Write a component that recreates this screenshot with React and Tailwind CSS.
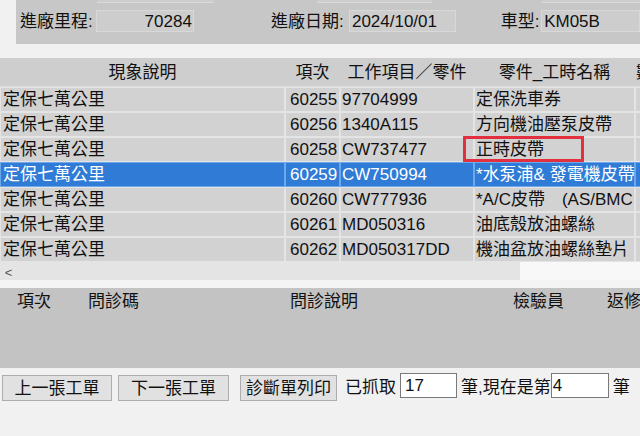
import React from 'react';

const rows = [
  { no: '60255', part: '97704999', name: '定保洗車券' },
  { no: '60256', part: '1340A115', name: '方向機油壓泵皮帶' },
  { no: '60258', part: 'CW737477', name: '正時皮帶' },
  { no: '60259', part: 'CW750994', name: '*水泵浦& 發電機皮帶', selected: true },
  { no: '60260', part: 'CW777936', name: '*A/C皮帶　(AS/BMC' },
  { no: '60261', part: 'MD050316', name: '油底殼放油螺絲' },
  { no: '60262', part: 'MD050317DD', name: '機油盆放油螺絲墊片' },
];

function Cell({ width, selected, className = '', children }) {
  return (
    <div
      className={`h-full flex items-center shrink-0 whitespace-nowrap overflow-hidden border ${
        selected ? 'border-[#6ea8ec] text-white' : 'border-[#e4e4e4] text-[#111]'
      } ${width} ${className}`}
    >
      {children}
    </div>
  );
}

export default function App() {
  return (
    <div
      className="w-[640px] h-[436px] overflow-hidden bg-[#f1f1f1] text-[17px] leading-none text-[#111]"
      style={{ fontFamily: '"Liberation Sans", "Noto Sans CJK TC", sans-serif' }}
    >
      {/* top info panel */}
      <div className="h-[44px] ml-[16px] bg-[#c7c7c7] flex flex-col">
        <div className="h-[3px] flex">
          <div className="ml-[81px] w-[120px] bg-[#cdcdcd] border-b border-[#dadada]" />
          <div className="ml-[103px] w-[118px] bg-[#cdcdcd] border-b border-[#dadada]" />
          <div className="ml-[110px] w-[100px] bg-[#cdcdcd] border-b border-[#dadada]" />
        </div>
        <div className="flex items-center mt-[7px] h-[22px]">
          <span className="ml-[4px] w-[77px]">進廠里程:</span>
          <div className="w-[99px] h-[22px] bg-[#cdcdcd] border border-[#d8d8d8] flex items-center justify-end pr-[1px]">
            70284
          </div>
          <span className="ml-[77px] w-[79px]">進廠日期:</span>
          <div className="w-[108px] h-[22px] bg-[#cdcdcd] border border-[#d8d8d8] flex items-center pl-[2px]">
            2024/10/01
          </div>
          <span className="ml-[45px] w-[41px]">車型:</span>
          <div className="w-[100px] h-[22px] bg-[#cdcdcd] border border-[#d8d8d8] flex items-center pl-[2px]">
            KM05B
          </div>
        </div>
      </div>

      <div className="h-[14px]" />

      {/* grid header */}
      <div className="h-[29px] bg-[#cecece] flex items-center border-b border-[#dedede]">
        <div className="w-[285px] text-center shrink-0">現象說明</div>
        <div className="w-[55px] text-center shrink-0">項次</div>
        <div className="w-[134px] text-center shrink-0">工作項目／零件</div>
        <div className="w-[161px] text-center shrink-0">零件_工時名稱</div>
        <div className="w-[5px] overflow-hidden pl-[1px] whitespace-nowrap">數</div>
      </div>

      {/* grid rows */}
      {rows.map((r) => (
        <div
          key={r.no}
          className={`h-[25px] flex ${r.selected ? 'bg-[#2f7bd6]' : 'bg-[#d2d2d2]'}`}
        >
          <Cell width="w-[285px]" selected={r.selected} className="pl-[2px]">
            定保七萬公里
          </Cell>
          <Cell width="w-[55px]" selected={r.selected} className="pl-[4px]">
            {r.no}
          </Cell>
          <Cell width="w-[134px]" selected={r.selected} className="pl-[1px]">
            {r.part}
          </Cell>
          <Cell width="w-[161px]" selected={r.selected} className="pl-[1px]">
            {r.name}
          </Cell>
          <Cell width="w-[40px]" selected={r.selected} />
        </div>
      ))}

      {/* red annotation box over row 3 */}
      <div className="h-0 relative">
        <div className="absolute left-[463px] top-[-126px] w-[121px] h-[26px] border-[3px] border-[#e3303e]" />
      </div>

      {/* horizontal scrollbar */}
      <div className="h-[18px] flex bg-[#f8f8f8]">
        <div className="w-[17px] flex items-center justify-center bg-[#e4e4e4] text-[#555] text-[13px] pt-[3px]">
          &lt;
        </div>
        <div className="w-[503px] bg-[#e4e4e4]" />
      </div>
      <div className="h-[8px] bg-[#f4f4f4]" />

      {/* lower panel */}
      <div className="h-[80px] bg-[#c3c3c3] flex items-start pt-[5px] whitespace-nowrap">
        <span className="ml-[17px]">項次</span>
        <span className="ml-[37px]">問診碼</span>
        <span className="ml-[151px]">問診說明</span>
        <span className="ml-[155px]">檢驗員</span>
        <span className="ml-[43px]">返修</span>
      </div>

      {/* bottom buttons */}
      <div className="flex items-start pt-[5px] whitespace-nowrap">
        <button className="ml-[2px] mt-[2px] w-[110px] h-[26px] bg-[#e1e1e1] border border-[#adadad]">
          上一張工單
        </button>
        <button className="ml-[6px] mt-[2px] w-[111px] h-[26px] bg-[#e1e1e1] border border-[#adadad]">
          下一張工單
        </button>
        <button className="ml-[11px] mt-[2px] w-[97px] h-[26px] bg-[#e1e1e1] border border-[#adadad]">
          診斷單列印
        </button>
        <span className="ml-[8px] mt-[6px]">已抓取</span>
        <div className="ml-[4px] w-[57px] h-[25px] bg-white border border-[#7a7a7a] flex items-center pl-[4px]">
          17
        </div>
        <span className="ml-[4px] mt-[6px]">筆,現在是第</span>
        <div className="w-[58px] h-[25px] bg-white border border-[#7a7a7a] flex items-center pl-[1px]">
          4
        </div>
        <span className="ml-[4px] mt-[6px]">筆</span>
      </div>
    </div>
  );
}
